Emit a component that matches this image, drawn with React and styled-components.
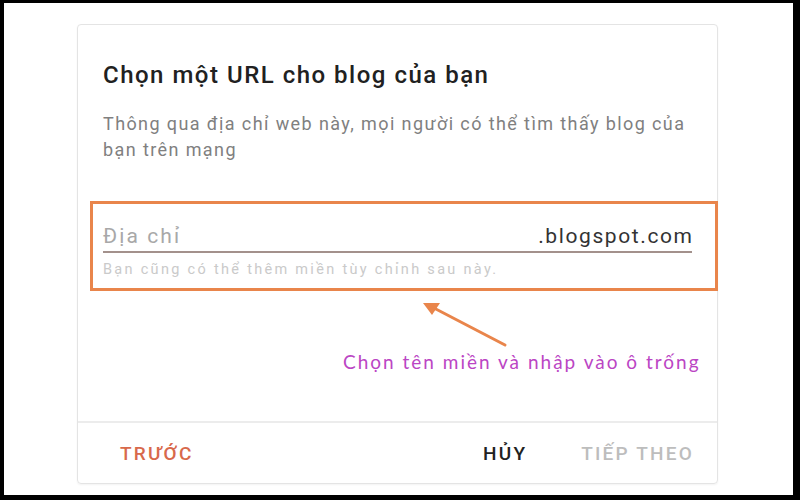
import React from "react";
import styled, { createGlobalStyle } from "styled-components";

const GlobalStyle = createGlobalStyle`
  html, body {
    margin: 0;
    padding: 0;
    background: #000000;
  }
  body {
    font-family: Roboto, "Noto Sans", "Liberation Sans", sans-serif;
  }
`;

const Frame = styled.div`
  width: 800px;
  height: 500px;
  box-sizing: border-box;
  padding: 3px 7px 5px 4px;
  background: #000000;
`;

const Screen = styled.div`
  height: 100%;
  background: #ffffff;
  padding: 21px 0 0 73px;
  box-sizing: border-box;
`;

const Card = styled.div`
  width: 641px;
  height: 460px;
  box-sizing: border-box;
  border: 1px solid #e4e4e4;
  border-radius: 4px;
  box-shadow: 0 1px 2px rgba(0, 0, 0, 0.05);
  display: flex;
  flex-direction: column;
`;

const Body = styled.div`
  flex: 1;
  padding: 36px 25px 0 25px;
  display: flex;
  flex-direction: column;
`;

const Title = styled.h1`
  margin: 0;
  font-size: 24px;
  line-height: 28px;
  font-weight: 500;
  color: #212121;
  letter-spacing: 1.5px;
  white-space: nowrap;
`;

const Description = styled.p`
  margin: 22px 0 0;
  font-size: 18px;
  line-height: 26px;
  color: #808080;
  letter-spacing: 1.4px;
`;

const Highlight = styled.div`
  margin: 38px -26px 0 -13px;
  border: 3px solid #e9854b;
  padding: 20px 23px 10px 10px;
`;

const InputRow = styled.div`
  display: flex;
  align-items: center;
  justify-content: space-between;
  height: 24px;
  padding-bottom: 3px;
  border-bottom: 2px solid #a3918c;
`;

const Placeholder = styled.span`
  font-size: 21px;
  color: #a8a8a8;
  letter-spacing: 2.1px;
`;

const Suffix = styled.span`
  font-size: 21px;
  color: #333333;
  letter-spacing: 1.6px;
  margin-right: -1.6px;
`;

const Helper = styled.div`
  margin-top: 9px;
  font-size: 14.5px;
  line-height: 16px;
  color: #cacaca;
  letter-spacing: 2.3px;
  white-space: nowrap;
`;

const Annotation = styled.div`
  display: flex;
  flex-direction: column;
`;

const Arrow = styled.svg`
  display: block;
  margin: 7px 0 0 315px;
`;

const Note = styled.div`
  margin: 1px 0 0 240px;
  font-family: Lato, "Open Sans", sans-serif;
  font-size: 19px;
  line-height: 22px;
  color: #bb45c4;
  letter-spacing: 2px;
  white-space: nowrap;
`;

const Footer = styled.div`
  height: 60px;
  border-top: 2px solid #ececec;
  display: flex;
  align-items: center;
  padding: 0 23px 0 42px;
`;

const Action = styled.span`
  font-size: 19px;
  font-weight: 500;
  letter-spacing: 2.2px;
  color: ${({ tone }) => tone};
  margin-left: ${({ gap }) => gap || 0}px;
`;

const Spacer = styled.div`
  flex: 1;
`;

export default function App() {
  return (
    <>
      <GlobalStyle />
      <Frame>
        <Screen>
          <Card>
            <Body>
              <Title>Chọn một URL cho blog của bạn</Title>
              <Description>
                Thông qua địa chỉ web này, mọi người có thể tìm thấy blog của bạn trên mạng
              </Description>
              <Highlight>
                <InputRow>
                  <Placeholder>Địa chỉ</Placeholder>
                  <Suffix>.blogspot.com</Suffix>
                </InputRow>
                <Helper>Bạn cũng có thể thêm miền tùy chỉnh sau này.</Helper>
              </Highlight>
              <Annotation>
                <Arrow width="92" height="52" viewBox="0 0 92 52">
                  <line x1="87" y1="47" x2="14" y2="9" stroke="#e9854b" strokeWidth="3" strokeLinecap="round" />
                  <polygon points="5,5 22,5 14,17" fill="#e9854b" />
                </Arrow>
                <Note>Chọn tên miền và nhập vào ô trống</Note>
              </Annotation>
            </Body>
            <Footer>
              <Action tone="#d8694c">TRƯỚC</Action>
              <Spacer />
              <Action tone="#212121">HỦY</Action>
              <Action tone="#bdbdbd" gap={54}>TIẾP THEO</Action>
            </Footer>
          </Card>
        </Screen>
      </Frame>
    </>
  );
}
